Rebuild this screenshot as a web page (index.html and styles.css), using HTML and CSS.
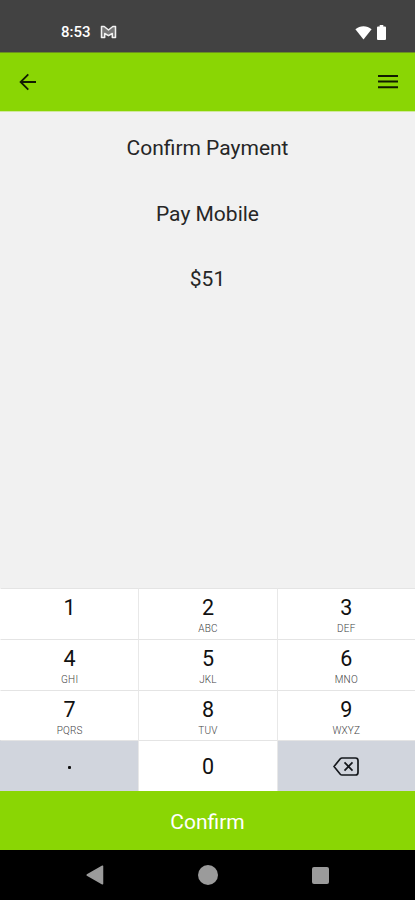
FILE: index.html
```html
<!DOCTYPE html>
<html lang="en">
<head>
  <meta charset="UTF-8" />
  <meta name="viewport" content="width=device-width, initial-scale=1.0"/>
  <title>Confirm Payment</title>
  <link rel="stylesheet" href="styles.css">
</head>
<body>

  <div class="status-bar">
    <span class="time">8:53</span>
    <svg class="mail" width="17" height="14" viewBox="0 0 17 14">
      <path d="M1.500 1.500h2.700l4.300 3.500 4.300-3.500h2.700v11h-3.200V8.500l-3.800 2.200-3.800-2.200v4H1.500z" fill="#777" stroke="#f2f2f2" stroke-width="1.500" stroke-linejoin="round"/>
    </svg>
    <svg class="wifi" width="17" height="15" viewBox="0 0 17 15">
      <path d="M8.500 14.500L.4 4.200C5 .2 12 .2 16.600 4.200z" fill="#fff"/>
    </svg>
    <svg class="battery" width="9" height="15" viewBox="0 0 9 15">
      <path d="M2.700 0h3.600v1.600H8q1 0 1 1V14q0 1-1 1H1q-1 0-1-1V2.600q0-1 1-1h1.700z" fill="#fff"/>
    </svg>
  </div>

  <header>
    <button aria-label="Back">
      <svg width="18" height="18" viewBox="0 0 18 18" fill="none" stroke="#111c00" stroke-width="1.800">
        <path d="M17 9H2M9.300 1.300L1.600 9l7.700 7.700"/>
      </svg>
    </button>
    <button aria-label="Menu">
      <svg width="20" height="14" viewBox="0 0 20 14" fill="#111c00">
        <path d="M0 0h20v2H0zM0 5.600h20v2H0zM0 11.200h20v2H0z"/>
      </svg>
    </button>
  </header>

  <main>
    <p>Confirm Payment</p>
    <p>Pay Mobile</p>
    <p>$51</p>
  </main>

  <div class="keypad">
    <button class="key">1</button>
    <button class="key">2<small>ABC</small></button>
    <button class="key">3<small>DEF</small></button>
    <button class="key">4<small>GHI</small></button>
    <button class="key">5<small>JKL</small></button>
    <button class="key">6<small>MNO</small></button>
    <button class="key">7<small>PQRS</small></button>
    <button class="key">8<small>TUV</small></button>
    <button class="key">9<small>WXYZ</small></button>
    <button class="key grey"><span class="dot"></span></button>
    <button class="key zero">0</button>
    <button class="key grey" aria-label="Delete">
      <svg width="26" height="19" viewBox="0 0 26 19" fill="none" stroke="#15181c" stroke-width="1.700">
        <path d="M9 1h13.500q2.500 0 2.500 2.500v12q0 2.500-2.500 2.500H9q-1 0-1.700-.8L1 9.500l6.300-7.700Q8 1 9 1z"/>
        <path d="M11.500 5.300l8 8.400M19.500 5.300l-8 8.400"/>
      </svg>
    </button>
  </div>

  <button class="confirm">Confirm</button>

  <nav>
    <svg width="18" height="20" viewBox="0 0 18 20"><path d="M16.500 1.200v17.600L1.200 10z" fill="#9b9b9b" stroke="#9b9b9b" stroke-width="1.500" stroke-linejoin="round"/></svg>
    <span class="home"></span>
    <span class="recent"></span>
  </nav>

</body>
</html>
```
FILE: styles.css
```css
* { box-sizing: border-box; margin: 0; padding: 0; }
body {
  display: flex;
  flex-direction: column;
  height: 900px;
  font-family: Roboto, sans-serif;
  background: #f1f1f1;
  color: #262626;
}
button {
  border: none;
  background: none;
  font-family: inherit;
  color: inherit;
}
svg {
  display: block;
}
.status-bar {
  display: flex;
  align-items: center;
  height: 52px;
  padding: 12px 29px 0 61px;
  background: #424242;
  color: #fff;
}
.time {
  font-size: 15px;
  font-weight: 500;
}
.mail {
  margin-left: 9px;
}
.wifi {
  margin-left: auto;
}
.battery {
  margin-left: 5px;
}
header {
  display: flex;
  align-items: center;
  justify-content: space-between;
  height: 60px;
  padding: 0 17px 0 19px;
  border-top: 1px solid #6a9020;
  border-bottom: 1px solid #d0e8a0;
  background: #8ad604;
}
main {
  flex: 1;
  padding-top: 23px;
  text-align: center;
}
main p {
  height: 26px;
  margin-bottom: 39.500px;
  font-size: 21px;
  line-height: 26px;
}
.keypad {
  display: grid;
  grid-template-columns: repeat(3, 1fr);
  grid-template-rows: repeat(4, 50.750px);
  height: 203px;
  background: #fff;
}
.key {
  display: flex;
  flex-direction: column;
  align-items: center;
  padding-top: 6px;
  border-top: 1px solid #e4e4e4;
  border-left: 1px solid #e8e8e8;
  font-size: 21.500px;
  line-height: 26px;
  color: #111;
}
.key:nth-child(3n+1) {
  border-left-color: transparent;
}
.key small {
  font-size: 10px;
  font-weight: 300;
  line-height: 15px;
  letter-spacing: 0.2px;
  color: #444;
}
.key.zero {
  justify-content: center;
  padding-top: 2px;
}
.key.grey {
  justify-content: center;
  padding: 0;
  background: #d1d5dd;
}
.dot {
  width: 3px;
  height: 3px;
  margin-top: 3px;
  border-radius: 1px;
  background: #111;
}
.confirm {
  height: 59px;
  padding-top: 2px;
  background: #8ad604;
  font-size: 21px;
  color: #fff;
}
nav {
  display: flex;
  align-items: center;
  justify-content: space-between;
  height: 50px;
  padding: 0 86px;
  background: #000;
}
.home {
  width: 20px;
  height: 20px;
  border-radius: 50%;
  background: #9b9b9b;
}
.recent {
  width: 17px;
  height: 17px;
  border-radius: 2px;
  background: #9b9b9b;
}
```
